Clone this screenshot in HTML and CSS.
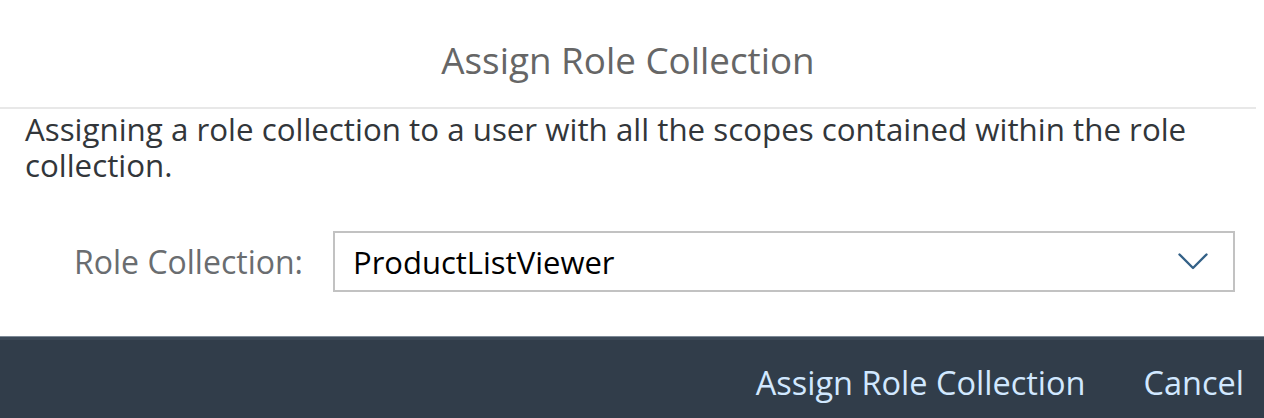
FILE: index.html
```html
<!DOCTYPE html>
<html lang="en">
<head>
<meta charset="utf-8">
<title>Assign Role Collection</title>
<link rel="stylesheet" href="styles.css">
</head>
<body>
<div class="dialog">
  <header class="dialog-header">
    <h1 class="dialog-title">Assign Role Collection</h1>
  </header>
  <section class="dialog-content">
    <p class="description">Assigning a role collection to a user with all the scopes contained within the role collection.</p>
    <div class="form-row">
      <label class="form-label">Role Collection:</label>
      <div class="select">
        <span class="select-value">ProductListViewer</span>
        <svg class="select-arrow" width="30" height="17" viewBox="0 0 30 17" aria-hidden="true">
          <polyline points="1.5,1.5 15,15 28.5,1.5" fill="none" stroke="#346187" stroke-width="2.4" stroke-linecap="round" stroke-linejoin="round"/>
        </svg>
      </div>
    </div>
  </section>
  <footer class="dialog-footer">
    <button class="footer-btn">Assign Role Collection</button>
    <button class="footer-btn">Cancel</button>
  </footer>
</div>
</body>
</html>
```

FILE: styles.css
```css
html, body {
  margin: 0;
  padding: 0;
  background: #ffffff;
  overflow: hidden;
}

body {
  font-family: "Open Sans", "Noto Sans", "Liberation Sans", sans-serif;
}

.dialog {
  display: flex;
  flex-direction: column;
  width: 1264px;
}

.dialog-header {
  margin-right: 8px;
  padding-top: 36px;
  padding-bottom: 23px;
  border-bottom: 2px solid #e8e8e8;
  display: flex;
  justify-content: center;
}

.dialog-title {
  margin: 0;
  font-size: 36.8px;
  line-height: 48px;
  font-weight: 400;
  color: #666666;
}

.dialog-content {
  display: flex;
  flex-direction: column;
  padding: 2px 29px 0 25px;
}

.description {
  margin: 0;
  font-size: 31.3px;
  line-height: 36px;
  color: #32363a;
}

.form-row {
  display: flex;
  align-items: center;
  gap: 30px;
  margin-top: 48px;
  margin-left: -25px;
}

.form-label {
  width: 303px;
  text-align: right;
  font-size: 32px;
  color: #6a6d70;
  flex: none;
}

.select {
  flex: 1;
  height: 57px;
  border: 2px solid #c2c2c2;
  display: flex;
  align-items: center;
  justify-content: space-between;
  padding: 0 25px 0 18px;
  background: #ffffff;
}

.select-value {
  font-size: 31px;
  color: #000000;
}

.select-arrow {
  display: block;
  flex: none;
}

.dialog-footer {
  margin-top: 44px;
  background: #313d4a;
  border-top: 1px solid #7d8996;
  box-shadow: inset 0 3px 0 #3c4958;
  display: flex;
  justify-content: flex-end;
  align-items: center;
  gap: 58px;
  padding: 26px 20px 15px 0;
}

.footer-btn {
  background: none;
  border: none;
  padding: 0;
  margin: 0;
  font-family: inherit;
  font-size: 32.5px;
  line-height: 40px;
  color: #d1e8ff;
  cursor: pointer;
}
```
